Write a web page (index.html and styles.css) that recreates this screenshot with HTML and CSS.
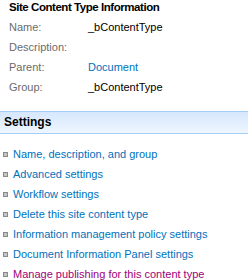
FILE: index.html
```html
<!DOCTYPE html>
<html>
<head>
<meta charset="utf-8">
<link rel="stylesheet" href="styles.css">
</head>
<body>
<div class="info">
  <div class="title">Site Content Type Information</div>
  <div class="grid">
    <div class="label">Name:</div><div class="value">_bContentType</div>
    <div class="label">Description:</div><div class="value"></div>
    <div class="label">Parent:</div><div class="value"><a class="link" href="#">Document</a></div>
    <div class="label">Group:</div><div class="value">_bContentType</div>
  </div>
</div>
<div class="band">Settings</div>
<ul class="list">
  <li class="item"><span class="bullet"></span><a class="link" href="#">Name, description, and group</a></li>
  <li class="item"><span class="bullet"></span><a class="link" href="#">Advanced settings</a></li>
  <li class="item"><span class="bullet"></span><a class="link" href="#">Workflow settings</a></li>
  <li class="item"><span class="bullet"></span><a class="link" href="#">Delete this site content type</a></li>
  <li class="item"><span class="bullet"></span><a class="link" href="#">Information management policy settings</a></li>
  <li class="item"><span class="bullet"></span><a class="link" href="#">Document Information Panel settings</a></li>
  <li class="item"><span class="bullet"></span><a class="link visited" href="#">Manage publishing for this content type</a></li>
</ul>
</body>
</html>
```
FILE: styles.css
```css
html, body {
  margin: 0;
  padding: 0;
  background: #fff;
  width: 248px;
  height: 280px;
  overflow: hidden;
}
body {
  font-family: "Liberation Sans", Arial, sans-serif;
  font-size: 11px;
  color: #000;
}
.info {
  padding-left: 9px;
}
.title {
  font-weight: bold;
  font-size: 11.5px;
  letter-spacing: -0.45px;
  line-height: 14px;
  margin-bottom: 3px;
}
.grid {
  display: grid;
  grid-template-columns: 79px auto;
  grid-auto-rows: 20px;
  line-height: 20px;
}
.label {
  color: #6b6b6b;
}
.value {
  color: #000;
}
.link {
  color: #0072bc;
  text-decoration: none;
}
.link.visited {
  color: #a0007a;
}
.band {
  margin-top: 14px;
  height: 21px;
  line-height: 21px;
  border-top: 1px solid #a6cdf7;
  border-bottom: 1px solid #a6cdf7;
  background: linear-gradient(#d6e7fd, #eff6ff);
  font-weight: bold;
  font-size: 12px;
  padding-left: 4px;
}
.list {
  list-style: none;
  margin: 10px 0 0 0;
  padding: 0 0 0 3px;
}
.item {
  display: flex;
  align-items: center;
  gap: 5px;
  height: 20px;
  line-height: 20px;
  white-space: nowrap;
}
.bullet {
  width: 3px;
  height: 3px;
  border: 1px solid #8a8a8a;
  background: #c4c4c4;
  flex: none;
}
```
